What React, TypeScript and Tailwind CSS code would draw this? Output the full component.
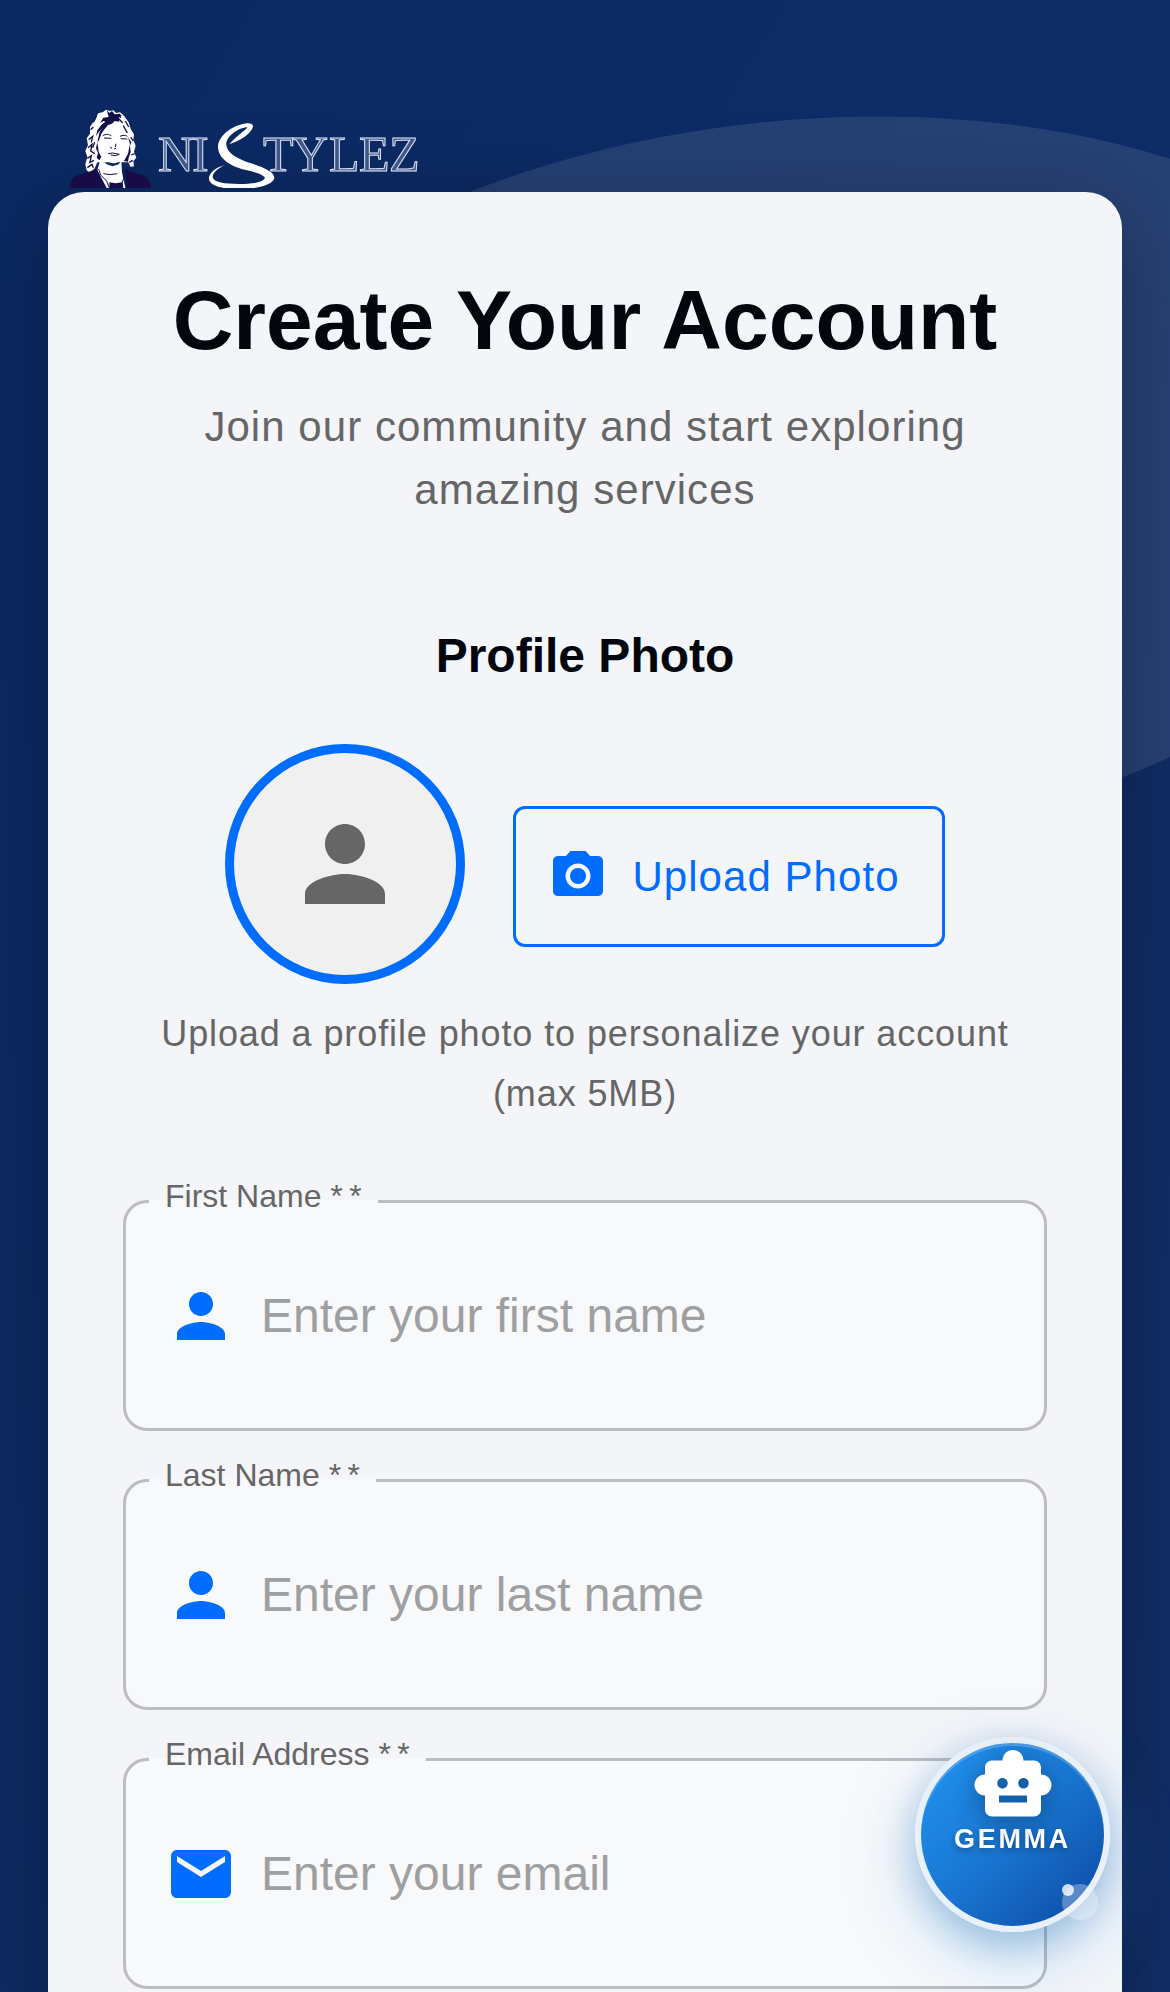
import { useState } from "react";
import { MdEmail, MdPerson, MdPhotoCamera, MdSmartToy } from "react-icons/md";
import type { IconType } from "react-icons";

type Field = {
  id: string;
  label: string;
  placeholder: string;
  type: string;
  icon: IconType;
};

const fields: Field[] = [
  { id: "firstName", label: "First Name", placeholder: "Enter your first name", type: "text", icon: MdPerson },
  { id: "lastName", label: "Last Name", placeholder: "Enter your last name", type: "text", icon: MdPerson },
  { id: "email", label: "Email Address", placeholder: "Enter your email", type: "email", icon: MdEmail },
];

function Logo() {
  return (
    <div className="mb-1 ml-[22px] flex h-20 items-end gap-1.5 text-white">
      <svg width="82" height="80" viewBox="30 9 246 240" aria-hidden="true">
        {/* hair */}
        <path
          d="M150 18L138 14L128 22L116 24L106 38L98 54L90 66L90 86L80 100L84 120L76 138L82 156L76 178L80 196L90 203L104 190L112 172H205L212 186L222 184L220 168L229 158L222 140L227 122L220 104L222 88L212 72L206 52L192 32L180 22L168 24L160 16Z"
          fill="#fff"
        />
        <path
          d="M140 14L148 24L156 18L164 28L180 26L184 40L176 36L178 50L164 48L156 56L144 60L134 72L124 86L118 104L112 112L118 84L124 72L114 84L108 94L112 76L124 60L136 50L130 48L120 54L130 38L146 36Z"
          fill="#120f48"
        />
        <path
          d="M112 112L116 140L124 156L118 166L110 158L114 144L108 130ZM204 96L210 116L204 146L192 168L204 170L206 158L212 142L210 122L214 112Z"
          fill="#120f48"
        />
        <path
          d="M110 32L100 52M92 74L100 66M86 104L98 94L94 112M84 128L96 118L92 138L104 146M82 160L94 152L90 172L102 166M82 188L96 178L100 188M196 48L206 66M190 62L202 84M212 96L220 108M214 150L224 146M208 172L218 166M170 34L188 54M104 112L98 128M178 34L184 30"
          stroke="#120f48"
          strokeWidth="4"
          fill="none"
        />
        {/* face */}
        <path
          d="M120 100C128 78 142 60 164 56C186 60 198 78 202 98C204 128 192 154 174 170C164 178 150 176 140 166C124 150 118 126 120 100Z"
          fill="#fff"
        />
        <path
          d="M128 92C138 86 146 88 154 92M180 94C188 90 196 90 202 94M132 99L154 100M182 101L202 102M168 116L166 126M150 126L156 130M162 132L168 130M144 146L158 144L178 148L166 152L152 150"
          stroke="#120f48"
          strokeWidth="3"
          fill="none"
        />
        {/* neck and jacket */}
        <path d="M122 160L140 178L158 184L176 178L184 168L186 202L196 249H140L112 196Z" fill="#fff" />
        <path
          d="M30 249C32 222 40 212 70 206L110 192L138 249ZM272 249C270 222 262 212 230 206L196 192L200 249Z"
          fill="#170c46"
        />
        <path d="M116 192L122 210L140 228L148 249M190 200L192 220L184 236L188 249M130 206L150 209L172 206" stroke="#120f48" strokeWidth="3" fill="none" />
        <path d="M148 232L166 235L188 232L190 249H148Z" fill="#170c46" />
      </svg>
      <svg width="264" height="80" viewBox="0 0 264 80" role="img" aria-label="NiStylez">
        <g fill="#3f588c" stroke="#dce3f2" strokeWidth="1" fontFamily="Liberation Serif, serif" fontSize="50">
          <text x="0" y="63">N</text>
          <text x="34" y="63">I</text>
          <text x="105" y="63">T</text>
          <text x="134" y="63">Y</text>
          <text x="171" y="63">L</text>
          <text x="201" y="63">E</text>
          <text x="231" y="63">Z</text>
        </g>
        <g transform="translate(43 2) scale(0.3333)">
          <path
            d="M85 102C120 92 152 68 156 50C157 40 145 38 130 41C90 48 52 78 51 110C52 150 95 170 135 180C165 187 187 195 192 204C185 218 150 222 115 222C70 222 38 217 35 202C35 188 50 176 70 166C45 172 22 190 24 208C28 230 70 238 118 237C170 236 215 225 220 205C221 185 185 172 150 160C110 147 78 130 76 105C74 82 105 56 138 51C143 54 110 75 85 102Z"
            fill="#fff"
          />
        </g>
      </svg>
    </div>
  );
}

function TextField({ field }: { field: Field }) {
  const [value, setValue] = useState("");
  const Icon = field.icon;

  return (
    <fieldset className="h-[231px] rounded-3xl border-3 border-[#bcbdbf] bg-[#f8f9fb] pl-[23px]">
      <legend className="h-0 px-4">
        <label htmlFor={field.id} className="block -translate-y-[30px] text-[32px] leading-12 text-[#666]">
          {field.label} *&thinsp;*
        </label>
      </legend>

      <div className="flex h-[225px] items-center gap-6 px-4">
        <Icon className="size-[72px] shrink-0 text-[#006dff]" />
        <input
          id={field.id}
          type={field.type}
          value={value}
          onChange={(e) => setValue(e.target.value)}
          placeholder={field.placeholder}
          className="h-20 min-w-0 flex-1 bg-transparent text-5xl outline-none placeholder:text-[#9e9fa0]"
        />
      </div>
    </fieldset>
  );
}

export default function App() {
  return (
    <div className="relative min-h-screen overflow-hidden bg-linear-to-br from-[#0a2963] to-[#122f68] px-12 pt-27 font-['Liberation_Sans',Arial,sans-serif]">
      <div className="absolute top-[121px] left-[12%] h-[728px] w-[112%] -rotate-6 rounded-[50%] bg-white/10" />

      <div className="relative">
        <Logo />

        <main className="rounded-[36px] bg-[#f4f5f9] px-[75px] pt-20 pb-20 shadow-[0_24px_96px_rgba(0,0,0,0.3)]">
          <h1 className="text-center text-[84px] leading-24 font-bold text-[#02060d]">
            Create Your Account
          </h1>

          <p className="mx-auto mt-[27px] max-w-[840px] text-center text-[42px] leading-[63px] tracking-wide text-[#666]">
            Join our community and start exploring amazing services
          </p>

          <section className="mt-[99px] text-center">
            <h2 className="text-5xl leading-[72px] font-bold text-[#02060d]">
              Profile Photo
            </h2>

            <div className="mt-13 flex items-center justify-center gap-12">
              <div className="flex size-60 items-center justify-center rounded-full border-9 border-[#006dff] bg-[#f0f0f0]">
                <MdPerson className="size-[120px] text-[#666]" />
              </div>

              <button
                type="button"
                className="mt-6 flex h-[141px] items-center gap-6 rounded-xl border-3 border-[#006dff] pr-[42px] pl-8 text-[42px] tracking-wide text-[#006dff]"
              >
                <MdPhotoCamera className="size-[60px]" />
                Upload Photo
              </button>
            </div>

            <p className="mt-5 text-4xl leading-[60px] tracking-wide text-[#666]">
              Upload a profile photo to personalize your account (max 5MB)
            </p>
          </section>

          <form className="mt-19 flex flex-col gap-12">
            {fields.map((field) => (
              <TextField key={field.id} field={field} />
            ))}
          </form>
        </main>
      </div>

      <button
        type="button"
        className="fixed right-[60px] bottom-[60px] flex size-[195px] flex-col items-center rounded-full border-6 border-[#e8f0fa] bg-linear-to-br from-[#2196f3] via-[#1976d2] to-[#0d47a1] text-white shadow-[0_24px_72px_rgba(33,150,243,0.3),0_12px_36px_rgba(0,60,110,0.25),inset_0_3px_0_rgba(255,255,255,0.2)]"
      >
        <MdSmartToy className="size-[84px] drop-shadow-[0_6px_12px_rgba(0,0,0,0.3)]" />
        <span className="text-[27px] leading-6 font-bold tracking-widest text-shadow-[0_3px_6px_rgba(0,0,0,0.3)]">
          GEMMA
        </span>
        <span className="absolute top-[141px] left-[141px] size-9 rounded-full bg-white/30" />
        <span className="absolute top-[141px] left-[141px] size-3 rounded-full bg-white/80" />
      </button>
    </div>
  );
}
